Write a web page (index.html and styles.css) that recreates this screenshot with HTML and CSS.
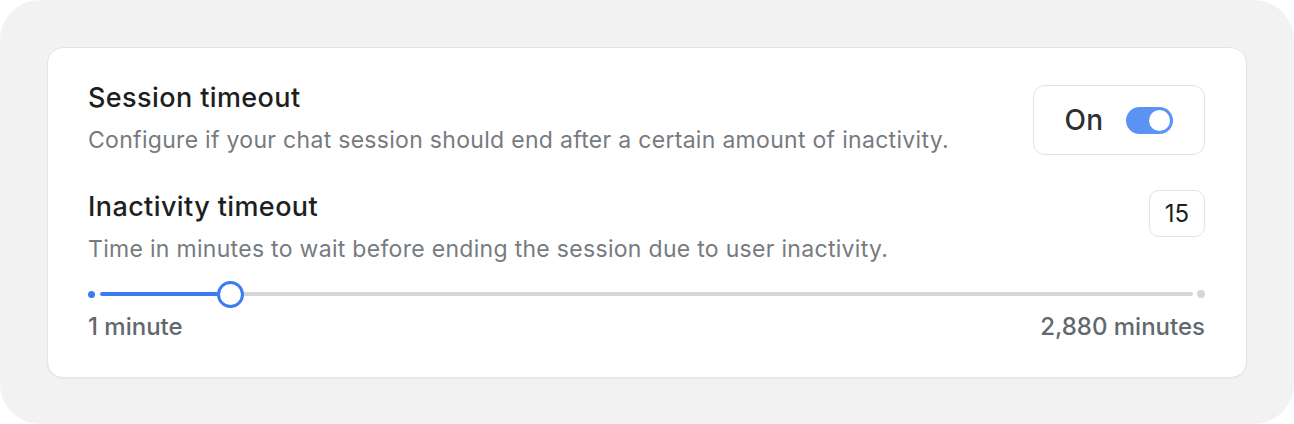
FILE: index.html
```html
<!DOCTYPE html>
<html>
<head>
<meta charset="utf-8">
<link rel="stylesheet" href="styles.css">
</head>
<body>
<div class="frame">
  <div class="card">
    <div class="row">
      <div class="text">
        <div class="title">Session timeout</div>
        <div class="desc">Configure if your chat session should end after a certain amount of inactivity.</div>
      </div>
      <div class="toggle-box">
        <span class="on">On</span>
        <span class="switch"><span class="knob"></span></span>
      </div>
    </div>
    <div class="row row2">
      <div class="text">
        <div class="title">Inactivity timeout</div>
        <div class="desc">Time in minutes to wait before ending the session due to user inactivity.</div>
      </div>
      <div class="value-box">15</div>
    </div>
    <div class="slider">
      <span class="dot dot-start"></span>
      <span class="track-fill"></span>
      <span class="thumb"></span>
      <span class="track-rest"></span>
      <span class="dot dot-end"></span>
    </div>
    <div class="labels">
      <span>1 minute</span>
      <span>2,880 minutes</span>
    </div>
  </div>
</div>
</body>
</html>
```
FILE: styles.css
```css
* { box-sizing: border-box; }
html, body { margin: 0; padding: 0; background: #ffffff; }
body { font-family: "Inter", "Noto Sans", sans-serif; }
.frame {
  width: 1294px;
  height: 424px;
  background: #f1f2f1;
  border-radius: 40px;
  padding: 47px;
}
.card {
  background: #ffffff;
  border: 1px solid #e3e4e3;
  border-radius: 16px;
  height: 331px;
  padding: 34px 41px 0 40px;
  box-shadow: 0 1px 2px rgba(0,0,0,0.04);
}
.row {
  display: flex;
  justify-content: space-between;
  align-items: flex-start;
}
.title {
  font-size: 27px;
  line-height: 32px;
  font-weight: 500;
  color: #1d1f21;
  letter-spacing: 0.4px;
}
.desc {
  font-size: 23px;
  line-height: 30px;
  color: #767b80;
  margin-top: 11px;
  letter-spacing: 0.3px;
}
.toggle-box {
  margin-top: 3px;
  width: 172px;
  height: 70px;
  border: 1.5px solid #e3e3e3;
  border-radius: 12px;
  display: flex;
  align-items: center;
  justify-content: center;
  gap: 23px;
}
.on {
  font-size: 28px;
  font-weight: 500;
  color: #2c3035;
  letter-spacing: 0.3px;
}
.switch {
  width: 47px;
  height: 27px;
  border-radius: 14px;
  background: #5b93f5;
  display: flex;
  align-items: center;
  justify-content: flex-end;
  padding-right: 1px;
}
.knob {
  width: 25px;
  height: 25px;
  border-radius: 50%;
  background: #fff;
  border: 2px solid #5b93f5;
}
.row2 .title { margin-top: 36px; }
.value-box {
  margin-top: 35px;
  width: 56px;
  height: 47px;
  border: 1.5px solid #e3e3e3;
  border-radius: 10px;
  display: flex;
  align-items: center;
  justify-content: center;
  font-size: 24px;
  color: #1d1f21;
}
.slider {
  display: flex;
  align-items: center;
  height: 28px;
  margin-top: 16px;
}
.dot { display: block; border-radius: 50%; flex: none; }
.dot-start { width: 7px; height: 7px; background: #3b7cf3; }
.track-fill { display: block; flex: none; height: 4px; background: #3b7cf3; width: 117px; margin-left: 5px; border-radius: 2px 0 0 2px; }
.thumb {
  display: block;
  flex: none;
  width: 27px;
  height: 27px;
  border-radius: 50%;
  background: #fff;
  border: 3.5px solid #3b7cf3;
}
.track-rest { display: block; flex: 1; height: 4px; background: #d6d6d6; border-radius: 0 2px 2px 0; }
.dot-end { width: 8px; height: 8px; background: #d6d6d6; margin-left: 4px; }
.labels {
  display: flex;
  justify-content: space-between;
  font-size: 24px;
  line-height: 30px;
  font-weight: 500;
  color: #62686e;
  margin-top: 4px;
}
```
